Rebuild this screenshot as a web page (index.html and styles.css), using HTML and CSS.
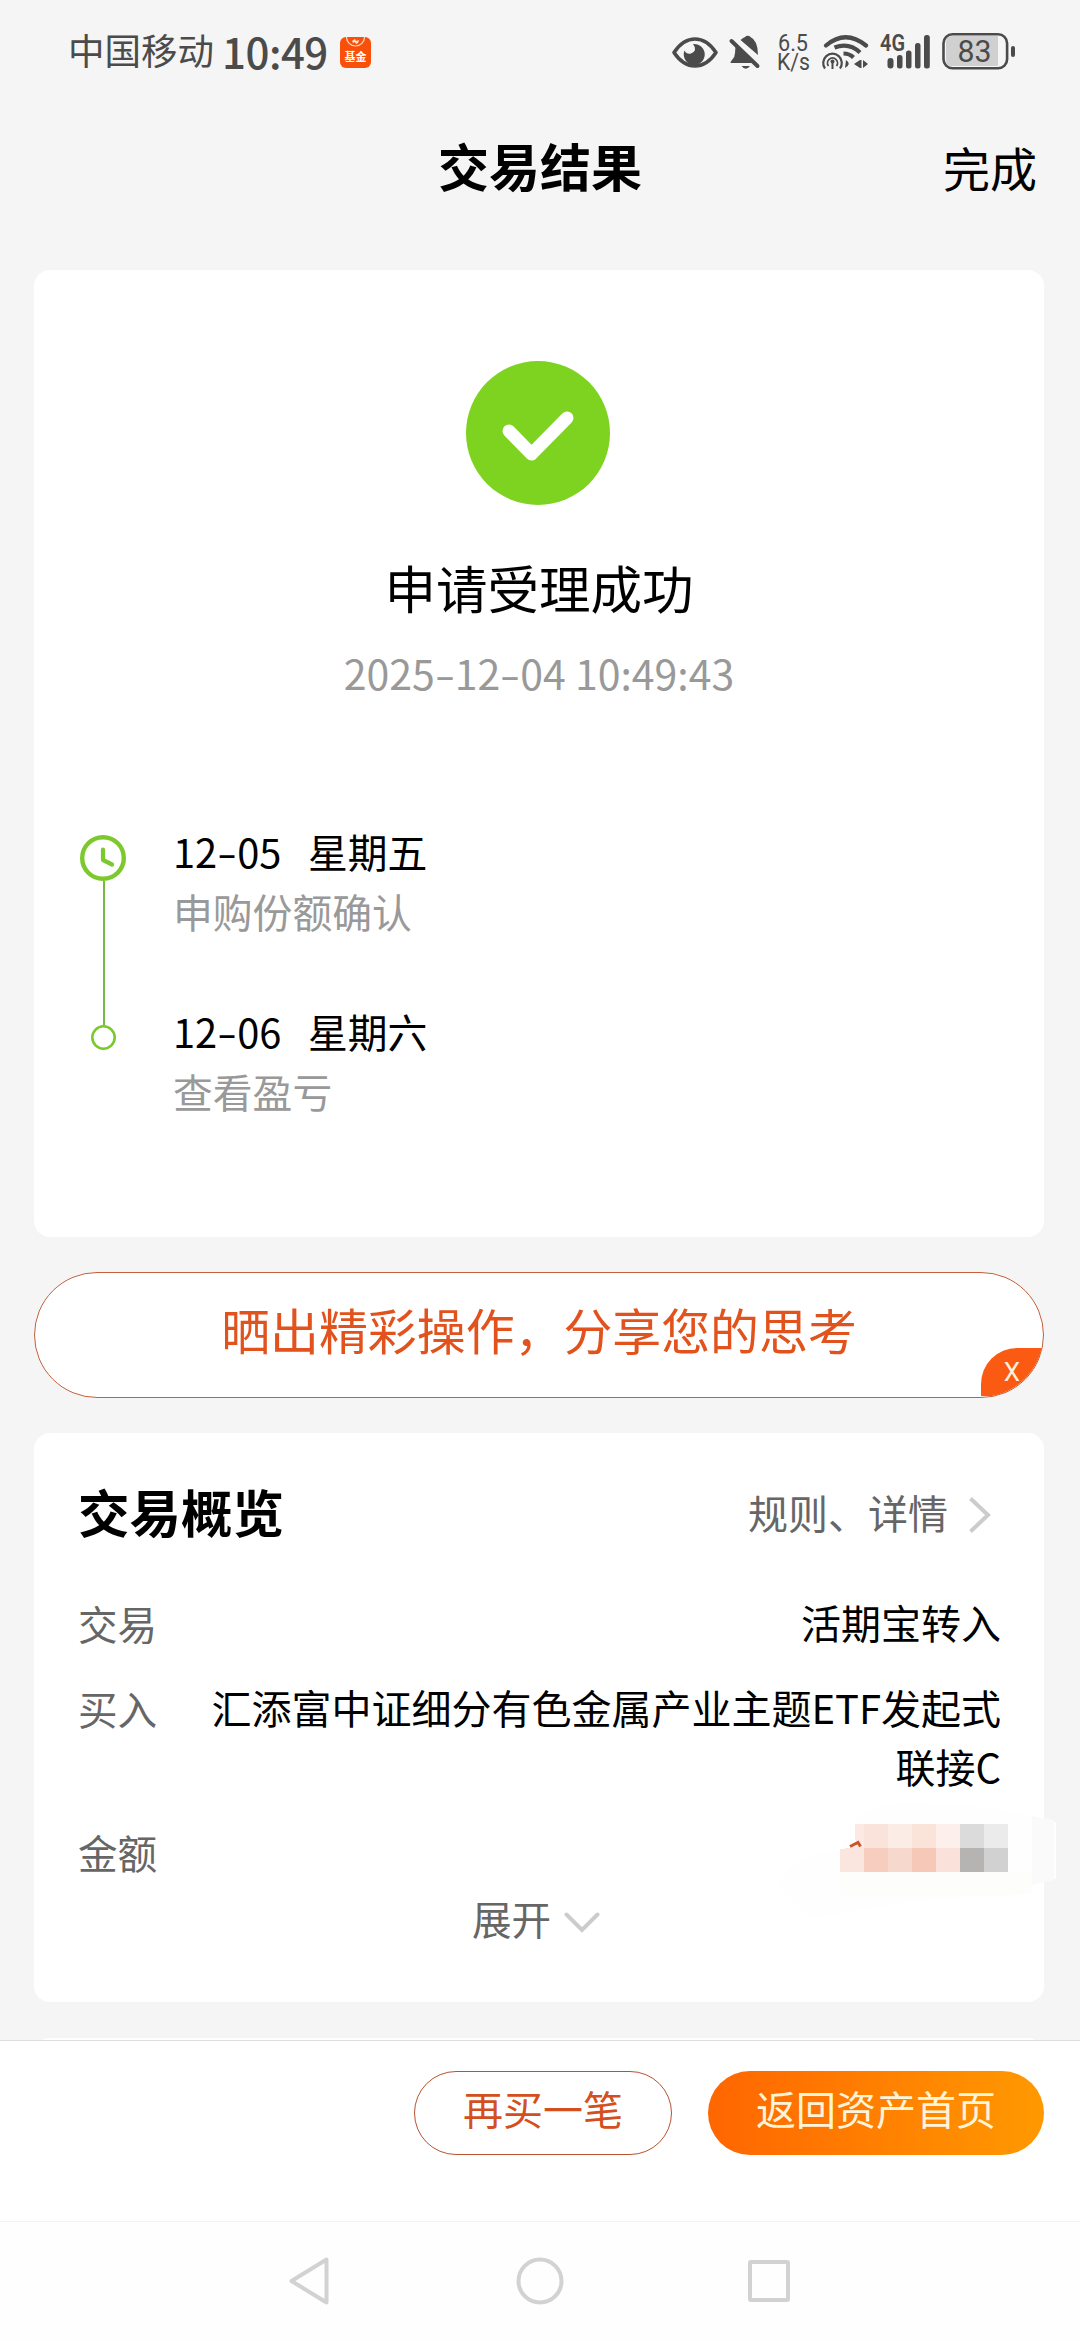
FILE: index.html
```html
<!DOCTYPE html>
<html lang="zh-CN">
<head>
<meta charset="utf-8">
<title>交易结果</title>
<link rel="stylesheet" href="styles.css">
</head>
<body>
<div class="screen">
  <div class="status">
    <span class="carrier">中国移动</span>
    <span class="time">10:49</span>
    <span class="app">
      <svg viewBox="0 0 31 31" width="31" height="31"><path d="M6.500 0a9 9 0 0 0 18 0" fill="none" stroke="#ffd9bd" stroke-width="1.200"/><path d="M12 4l3-2 1 2 3-1-1 3-2 1-1-2-2 1z" fill="#ffe6d0"/></svg>
      <span class="app-name">基金</span>
    </span>
    <svg class="icons" viewBox="0 0 346 40" width="346" height="40" fill="#4b4b4b">
      <path d="M4 20.500C16 2.500 34 2.500 46 20.500C34 38.500 16 38.500 4 20.500Z" fill="none" stroke="#4b4b4b" stroke-width="3.600" stroke-linejoin="round"/>
      <path d="M23 12a10.500 10.500 0 1 1-8.500 6.500q2 4 6.500 3q7-3 2-9.500z"/>
      <path d="M65.500 14.500l20 16.500H60.500q0-1.500 1.500-3q3-3 3-7zM70.500 8q3-2.500 4.500-3a3.500 3.500 0 0 1 5.500 0q7.500 3.500 7.500 18z"/>
      <path d="M61.500 9L87.500 34" fill="none" stroke="#4b4b4b" stroke-width="4" stroke-linecap="round"/>
      <path d="M71.500 34h8.500q-4.200 5.500-8.500 0z"/>
      <g fill="none" stroke="#4b4b4b">
        <path d="M156 13.500Q175.500 -3 196 13.500" stroke-width="4.200" stroke-linecap="round"/>
        <path d="M164.500 15.500Q179 10 190 20.500" stroke-width="4.200"/>
        <path d="M173.500 21.500q6 0 10 4" stroke-width="4.200"/>
        <path d="M155 36.500a9.300 9.300 0 1 1 15 0" stroke-width="2.200"/>
        <path d="M158.500 34a5 5 0 1 1 8 0" stroke-width="1.800"/>
      </g>
      <circle cx="162.500" cy="29.500" r="2"/>
      <path d="M161.500 31h2v6h-2zM176 28q6 4-1 8zM184 32l6-4v8zM190 28h1.500v8h-1.500zM193 28l5 4-5 4z"/>
      <rect x="217.500" y="26" width="6" height="10.500" rx="3"/>
      <rect x="227" y="23" width="5.500" height="13.500" rx="2.500"/>
      <rect x="236" y="18.500" width="5.500" height="18" rx="2.500"/>
      <rect x="245" y="11" width="5.500" height="25.500" rx="2.500"/>
      <rect x="254" y="3" width="5.800" height="33.500" rx="2.500"/>
      <text x="108" y="18.800" class="tiny" textLength="30" lengthAdjust="spacingAndGlyphs">6.5</text>
      <text x="107" y="37.500" class="tiny" textLength="33" lengthAdjust="spacingAndGlyphs">K/s</text>
      <text x="210" y="19" class="net" textLength="25" lengthAdjust="spacingAndGlyphs">4G</text>
      <path d="M282 4h46v30h-46q-6 0-6-6V10q0-6 6-6z" fill="#d0d0d0"/>
      <rect x="273.500" y="2.200" width="63.600" height="34" rx="9" fill="none" stroke="#4b4b4b" stroke-width="2.600"/>
      <rect x="341" y="14" width="4" height="11" rx="2"/>
      <text x="287.500" y="30" class="pct" textLength="34" lengthAdjust="spacingAndGlyphs">83</text>
    </svg>
  </div>
  <header class="header">
    <h1 class="title">交易结果</h1>
    <a class="done">完成</a>
  </header>
  <main class="content">
    <section class="card result">
      <svg class="badge" viewBox="0 0 144 144" width="144" height="144"><circle cx="72" cy="72" r="72" fill="#7ed321"/><path d="M43 70l22.500 23L101 57" fill="none" stroke="#fff" stroke-width="13" stroke-linecap="round" stroke-linejoin="round"/></svg>
      <div class="headline">申请受理成功</div>
      <div class="stamp">2025<span class="dash">-</span>12<span class="dash">-</span>04 10:49:43</div>
      <div class="timeline">
        <svg class="track" viewBox="0 0 46 216" width="46" height="216" fill="none" stroke="#7bc92d"><circle cx="23" cy="23" r="20.800" stroke-width="4.400"/><path d="M23 14.500v10.500l9 4.500" stroke-width="4.200" stroke-linecap="round" stroke-linejoin="round"/><path d="M24 46v145" stroke-width="2" stroke="#79b83e"/><circle cx="23.500" cy="202.500" r="11.200" stroke-width="2.600"/></svg>
        <div class="steps">
          <div class="step"><div class="day"><span class="date">12<span class="dash">-</span>05</span><span>星期五</span></div><div class="note">申购份额确认</div></div>
          <div class="step"><div class="day"><span class="date">12<span class="dash">-</span>06</span><span>星期六</span></div><div class="note">查看盈亏</div></div>
        </div>
      </div>
    </section>
    <div class="share">
      <span>晒出精彩操作，分享您的思考</span>
      <span class="close">X</span>
    </div>
    <section class="card overview">
      <div class="overview-head">
        <h2 class="subtitle">交易概览</h2>
        <a class="more">规则、详情<svg viewBox="0 0 24 38" width="24" height="38"><path d="M2.500 2.500L20 19 2.500 35.500" fill="none" stroke="#ccc" stroke-width="4"/></svg></a>
      </div>
      <div class="row"><span class="label">交易</span><span class="value">活期宝转入</span></div>
      <div class="row"><span class="label">买入</span><span class="value">汇添富中证细分有色金属产业主题ETF发起式联接C</span></div>
      <div class="row amount"><span class="label">金额</span>
        <svg class="mosaic" viewBox="780 1800 276 130" width="276" height="130" shape-rendering="crispEdges">
          <path d="M860 1815q20-12 60-11l65 3 71 15v57l-60 16-76 5-110 18-30-30q0-30 60-37z" fill="#fefefe"/>
          <path d="M840 1872h192v22l-30 2h-162z" fill="#fdfdfc"/>
          <path d="M1032 1816l22 4v60l-22 5z" fill="#fafafa"/>
          <path d="M855 1824h9v24h-7q-3-12-2-24z" fill="#fce9e3"/>
          <path d="M864 1824h24v24h-24z" fill="#fae3db"/><path d="M888 1824h24v24h-24z" fill="#fbece6"/><path d="M912 1824h24v24h-24z" fill="#fae3d8"/><path d="M936 1824h24v24h-24z" fill="#fdf0ec"/><path d="M960 1824h24v24h-24z" fill="#dbdbdb"/><path d="M984 1824h24v24h-24z" fill="#ebebeb"/>
          <path d="M840 1849q12-1 14-3l10 2v24h-24z" fill="#fbe6df"/><path d="M864 1848h24v24h-24z" fill="#f7cdbf"/><path d="M888 1848h24v24h-24z" fill="#f7d8cd"/><path d="M912 1848h24v24h-24z" fill="#f6c8b7"/><path d="M936 1848h24v24h-24z" fill="#fae2da"/><path d="M960 1848h24v24h-24z" fill="#b5b4b2"/><path d="M984 1848h24v24h-24z" fill="#d1d1d1"/>
          <path d="M850 1846.500l8-4 2.500 4" fill="none" stroke="#c9562b" stroke-width="3" shape-rendering="auto"/>
        </svg>
      </div>
      <div class="expand">展开<svg viewBox="0 0 36 22" width="36" height="22"><path d="M2.500 2.500L18 18 33.500 2.500" fill="none" stroke="#ccc" stroke-width="4" stroke-linecap="round"/></svg></div>
    </section>
    <section class="card next"></section>
  </main>
  <footer class="actions">
    <a class="btn ghost">再买一笔</a>
    <a class="btn solid">返回资产首页</a>
  </footer>
  <nav class="nav">
    <svg viewBox="0 0 504 50" width="504" height="50" fill="none" stroke="#d2d2d2" stroke-width="4" stroke-linejoin="round"><path d="M38.500 3.500v43L3.500 25z"/><circle cx="252" cy="25" r="21.500"/><rect x="462" y="6" width="38" height="38" rx="1"/></svg>
  </nav>
</div>
</body>
</html>
```
FILE: styles.css
```css
* { box-sizing: border-box; }
body { margin: 0; background: #f5f5f5; font-family: "Noto Sans CJK SC", sans-serif; color: #000; }
svg { display: block; flex: none; }
h1, h2 { margin: 0; }
.screen { width: 1080px; height: 2340px; display: flex; flex-direction: column; overflow: hidden; }

.status { height: 104px; display: flex; align-items: center; padding: 0 64px 0 68px; color: #4b4b4b; white-space: nowrap; }
.carrier { width: 144px; font-size: 36.500px; line-height: 50px; margin-top: -4px; }
.time { font-size: 42px; line-height: 50px; font-weight: 500; margin: -3px 0 0 10px; width: 108px; letter-spacing: -0.500px; }
.app { width: 31px; height: 31px; border-radius: 6px; background: #f8500a; display: grid; margin: 1px auto 0 10px; }
.app > * { grid-area: 1 / 1; }
.app-name { font-size: 11px; line-height: 12px; padding-top: 13px; text-align: center; color: #fff; font-weight: 700; }
.tiny { font: 400 23px Roboto, sans-serif; }
.net { font: 600 23px Roboto, sans-serif; }
.pct { font: 400 32px Roboto, sans-serif; }

.header { height: 121px; display: grid; grid-template-columns: 1fr auto 1fr; align-items: center; padding: 0 43px; }
.title { grid-column: 2; font-size: 51px; line-height: 60px; font-weight: 700; }
.done { justify-self: end; font-size: 47px; line-height: 60px; margin-top: 4px; }

.content { flex: none; height: 1815px; padding: 45px 36px 0 34px; overflow: hidden; }
.card { background: #fff; border-radius: 16px; }
.result { height: 967px; padding: 91px 46px 0; display: flex; flex-direction: column; align-items: center; }
.badge { margin-right: 2px; }
.headline { font-size: 51.500px; line-height: 60px; margin-top: 52px; }
.stamp { font-size: 41px; line-height: 50px; margin-top: 30px; color: #999; }
.dash { display: inline-block; width: 20px; text-align: center; transform: scaleX(1.45); }
.timeline { align-self: stretch; display: flex; gap: 47px; margin-top: 123px; }
.track { margin-top: 15px; }
.steps { display: flex; flex-direction: column; gap: 61px; padding-top: 1px; font-size: 39.800px; line-height: 59.500px; }
.day { display: flex; }
.date { width: 135px; }
.note { color: #999; }

.share { position: relative; height: 126px; margin-top: 35px; border: 1px solid #c4603a; border-radius: 63px; background: #fff; color: #e2521c; font-size: 48.900px; line-height: 112px; text-align: center; overflow: hidden; }
.close { position: absolute; right: 0; bottom: 1px; width: 62px; height: 48px; border-top-left-radius: 36px; background: #fb5a12; color: #fff0dc; font: 26px/48px Roboto, sans-serif; }

.overview { position: relative; height: 569px; margin-top: 35px; padding: 47px 43px 0 44px; }
.overview-head { display: flex; justify-content: space-between; height: 113px; }
.subtitle { font-size: 51.500px; line-height: 62px; }
.more { display: flex; gap: 20px; align-items: center; height: 64px; padding-right: 9px; font-size: 40px; color: #666; }
.more svg { margin-top: 6px; }
.row { display: flex; justify-content: space-between; margin-bottom: 25px; font-size: 40px; line-height: 59.500px; }
.label { color: #666; font-size: 39.600px; }
.value { width: 796px; text-align: right; }
.amount { margin-bottom: 7px; }
.mosaic { position: absolute; left: 746px; top: 367px; }
.expand { display: flex; justify-content: center; gap: 13px; align-items: center; font-size: 39.600px; line-height: 59.500px; color: #666; padding-right: 7px; }
.expand svg { margin-top: 10px; }
.next { height: 40px; margin-top: 36px; }

.actions { height: 181px; flex: none; border-top: 1px solid #dedede; background: #fff; display: flex; justify-content: flex-end; gap: 36px; padding: 30px 36px 0; }
.btn { height: 84px; border-radius: 42px; font-size: 40px; line-height: 75px; text-align: center; }
.ghost { width: 258px; border: 1px solid #b8532f; color: #d44f20; line-height: 73px; }
.solid { width: 336px; background: linear-gradient(90deg, #ff6600, #ff9900); color: #fff3d8; }
.nav { flex: 1; border-top: 1px solid #f2f2f2; background: #fefefe; display: flex; justify-content: center; padding-top: 34px; }
```
